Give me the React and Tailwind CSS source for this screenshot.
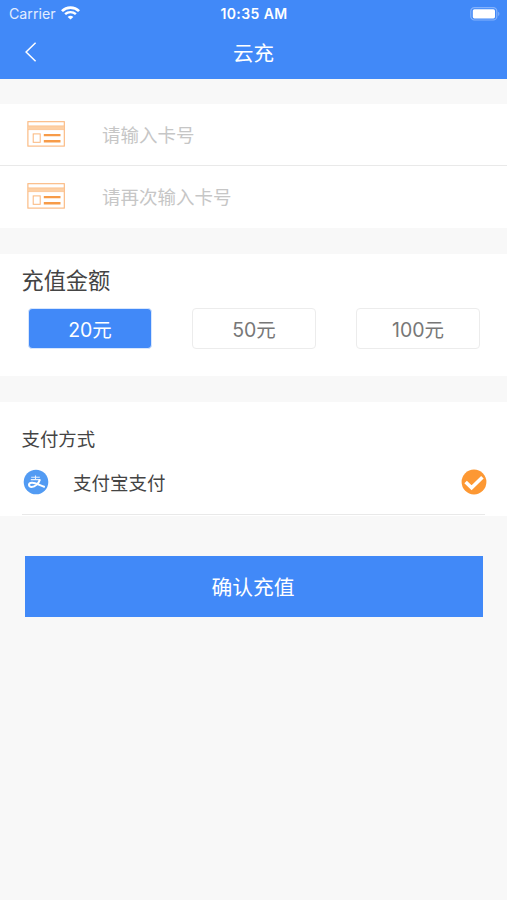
import { useState } from 'react';

const amounts = [20, 50, 100];

function WifiIcon() {
  return (
    <svg className="ml-[5px] h-[14px] w-[19px]" viewBox="0 0 18 14" preserveAspectRatio="none" fill="none" stroke="#fff">
      <path d="M0.9 5.1C5.4 0.5 12.6 0.5 17.1 5.1" strokeWidth="2.6" />
      <path d="M3.9 8.2C6.8 5.4 11.2 5.4 14.1 8.2" strokeWidth="2.3" />
      <path d="M9 13.6L6.3 10.9C7.8 9.5 10.2 9.5 11.7 10.9Z" fill="#fff" stroke="none" />
    </svg>
  );
}

function BatteryIcon() {
  return (
    <svg className="h-[14px] w-[30px]" viewBox="0 0 30 14">
      <rect x="0.8" y="0.6" width="26" height="12.4" rx="3.6" fill="none" stroke="#84b2fb" strokeWidth="1.2" />
      <rect x="2.8" y="2.2" width="22.2" height="9.2" rx="1.6" fill="#fff" />
      <path d="M28.2 4.8C29.8 5.4 29.8 8.4 28.2 9Z" fill="#84b2fb" />
    </svg>
  );
}

function CardIcon() {
  return (
    <svg className="h-[26px] w-[38px] shrink-0" viewBox="0 0 38 26" fill="none">
      <rect x="0.9" y="0.7" width="36.4" height="24.4" stroke="#fbb67b" strokeWidth="1.1" />
      <path d="M1 5H37V8.6H1Z" fill="#fdd0a5" />
      <path d="M1 4.8H37M1 8.6H37" stroke="#fbbd85" strokeWidth="0.7" />
      <rect x="6.2" y="12.9" width="7" height="8.4" stroke="#fbb67b" strokeWidth="1" />
      <path d="M16.8 14.1H33.5M16.8 20.2H33.5" stroke="#f79b48" strokeWidth="2.4" />
    </svg>
  );
}

function AlipayIcon() {
  return (
    <svg className="h-[26px] w-[26px] shrink-0" viewBox="0 0 26 26" fill="none" stroke="#fff">
      <circle cx="13" cy="13" r="12.3" fill="#529bf3" stroke="none" />
      <path d="M8.2 8.2H16.8M7.8 10.6H17.2M12.5 6.4V10.6" strokeWidth="1.1" strokeOpacity="0.85" />
      <path
        d="M17 10.4C15.8 14.2 12.2 18 8.6 18C5.1 18 5 13.8 9 13.7C12.8 13.6 16.5 16.3 21.8 18"
        strokeWidth="2"
      />
    </svg>
  );
}

function CheckIcon() {
  return (
    <svg className="h-[26px] w-[26px]" viewBox="0 0 26 26" fill="none">
      <circle cx="13" cy="13" r="12.4" fill="#fd9833" />
      <path d="M4.6 13L10.6 18.8L21.4 8.2" stroke="#fff" strokeWidth="3.6" />
    </svg>
  );
}

function CardField({ placeholder }) {
  return (
    <label className="flex h-[60px] items-center pl-[27px]">
      <CardIcon />
      <input
        type="text"
        placeholder={placeholder}
        className="ml-[37px] h-10 w-[340px] bg-transparent pt-[2px] text-[18.5px] text-[#333] outline-none placeholder:text-[#c6c6c6]"
      />
    </label>
  );
}

export default function App() {
  const [amount, setAmount] = useState(20);

  return (
    <div className="h-[900px] w-full overflow-hidden bg-[#f8f8f8] font-['Inter','Noto_Sans_CJK_SC',sans-serif] text-[#444]">
      <header className="h-[79px] bg-[#4189f8] text-white">
        <div className="grid h-[27px] grid-cols-3 items-center pr-[7px] pl-[9px]">
          <div className="flex items-center text-[14.2px] text-[#e2edff]">
            Carrier
            <WifiIcon />
          </div>
          <div className="pr-px text-center text-[14px] font-semibold tracking-[0.4px]">10:35 AM</div>
          <div className="flex justify-end">
            <BatteryIcon />
          </div>
        </div>
        <div className="grid h-[50px] grid-cols-3 items-center">
          <button type="button" className="pl-[24px]">
            <svg className="h-[20px] w-[13px]" viewBox="0 0 13 20" fill="none" stroke="#fff" strokeWidth="1.5">
              <path d="M11.6 0.8L2.1 10L11.6 19.2" />
            </svg>
          </button>
          <h1 className="pt-[4px] text-center text-[20.5px]">云充</h1>
        </div>
      </header>

      <section className="mt-[25px] h-[124px] bg-white">
        <div className="h-[62px] border-b border-[#e9e9e9]">
          <CardField placeholder="请输入卡号" />
        </div>
        <div className="h-[62px]">
          <CardField placeholder="请再次输入卡号" />
        </div>
      </section>

      <section className="mt-[26px] h-[122px] bg-white pt-[11px]">
        <h2 className="pl-[21.5px] text-[22.2px] leading-[32px]">充值金额</h2>
        <div className="mt-[11px] flex justify-between pr-[27px] pl-[28px]">
          {amounts.map((value) => (
            <button
              key={value}
              type="button"
              onClick={() => setAmount(value)}
              className={
                amount === value
                  ? 'h-[41px] w-[124px] rounded-[4px] border border-[#d7e6fd] bg-[#4189f8] pt-[4px] text-[19.5px] text-white'
                  : 'h-[41px] w-[124px] rounded-[4px] border border-[#ececec] bg-white pt-[4px] text-[19.5px] text-[#777]'
              }
            >
              {value}元
            </button>
          ))}
        </div>
      </section>

      <section className="mt-[26px] h-[114px] bg-white pt-[23px]">
        <h2 className="pl-[21.5px] text-[18.4px] leading-[28px]">支付方式</h2>
        <div className="mr-[22px] ml-[22px] flex h-[62px] items-center border-b border-[#e9e9e9] pb-[3px]">
          <div className="ml-px">
            <AlipayIcon />
          </div>
          <span className="ml-[24px] flex-1 pt-[3px] text-[18.5px]">支付宝支付</span>
          <div className="-mr-[2px]">
            <CheckIcon />
          </div>
        </div>
      </section>

      <div className="mt-[40px] pr-[24px] pl-[25px]">
        <button type="button" className="h-[61px] w-full bg-[#4189f8] pt-[2px] pr-[2px] text-[20.8px] text-white">
          确认充值
        </button>
      </div>
    </div>
  );
}
